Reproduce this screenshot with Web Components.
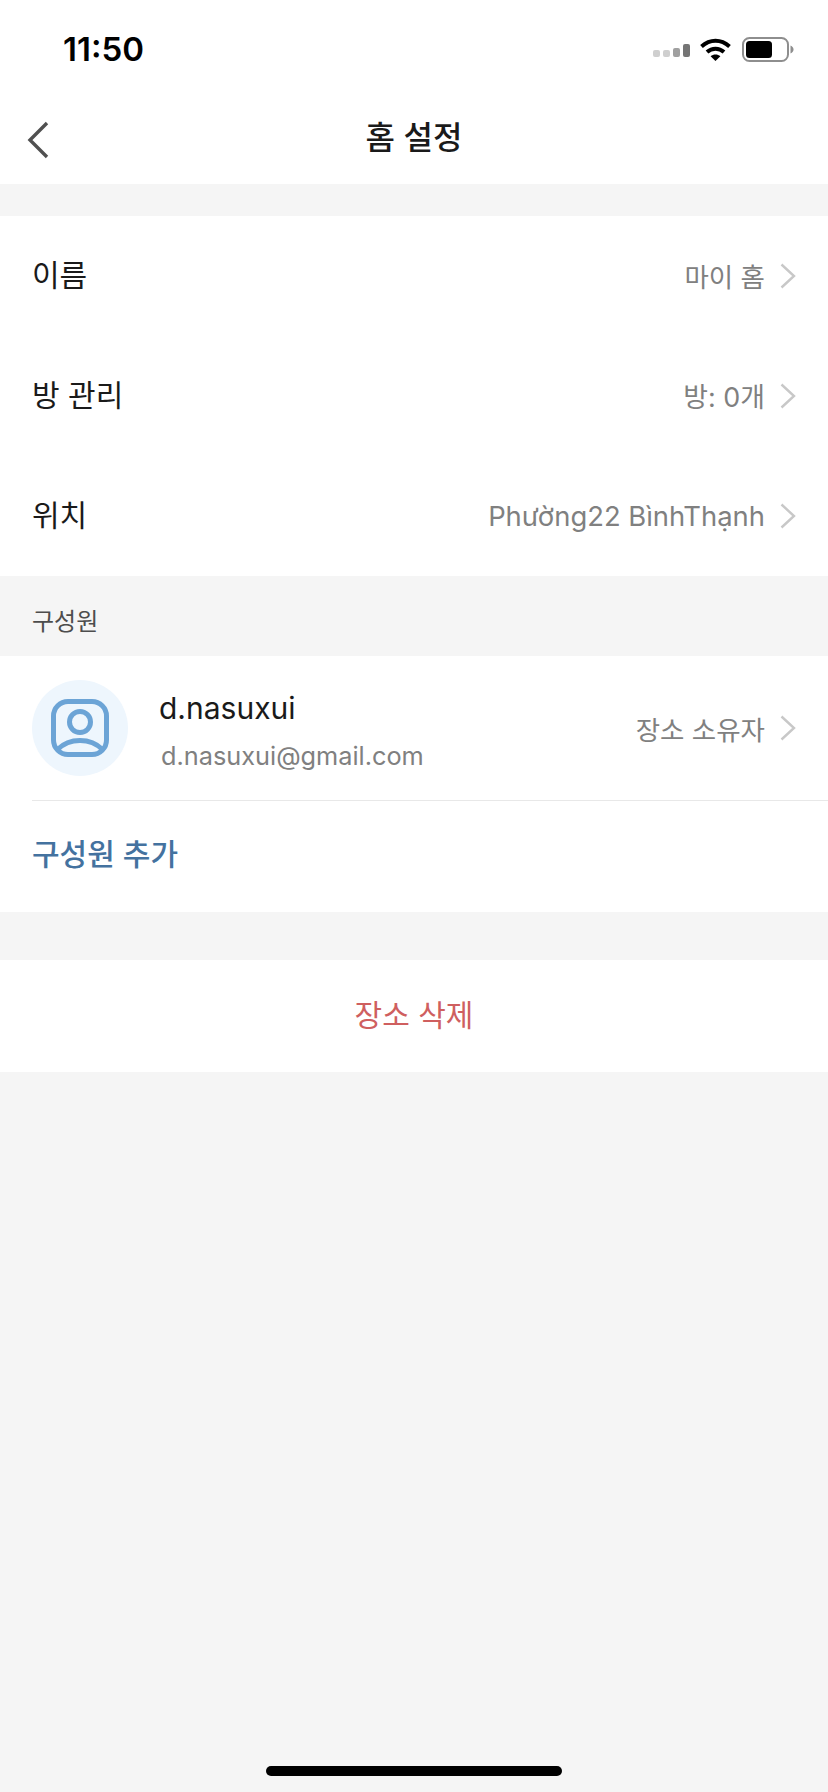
<!DOCTYPE html>
<html lang="ko">
<head>
<meta charset="utf-8">
<title>홈 설정</title>
<style>
html, body { margin: 0; height: 100%; }
body {
    background: #f5f5f5;
    font-family: Inter, "Noto Sans CJK KR", sans-serif;
}
app-screen { height: 1792px; }
</style>
</head>
<body>
<app-screen>
    <status-bar time="11:50"></status-bar>
    <nav-bar heading="홈 설정"></nav-bar>
    <setting-group style="margin-top:32px">
        <setting-row label="이름" value="마이 홈" value-lift="2"></setting-row>
        <setting-row label="방 관리" value="방: 0개" value-size="26.9" value-lift="2"></setting-row>
        <setting-row label="위치" value="Phường22 BìnhThạnh" value-size="27.4"></setting-row>
    </setting-group>
    <section-title>구성원</section-title>
    <setting-group>
        <member-row name="d.nasuxui" email="d.nasuxui@gmail.com" role="장소 소유자"></member-row>
        <action-row color="#44729f" align="left" weight="500" height="111" lift="9">구성원 추가</action-row>
    </setting-group>
    <setting-group style="margin-top:48px">
        <action-row color="#cf5f5f" align="center" weight="400" height="112" lift="6">장소 삭제</action-row>
    </setting-group>
    <home-indicator></home-indicator>
</app-screen>

<script>
const CHEVRON = `<svg width="16" height="26" viewBox="0 0 16 26" fill="none"><path d="M1.5 1.5 14 13 1.5 24.5" stroke="#c8c8c8" stroke-width="2.4"/></svg>`;

class AppScreen extends HTMLElement {
    constructor() {
        super();
        this.attachShadow({ mode: 'open' });
        this.shadowRoot.innerHTML = `
<style>
:host { display: flex; flex-direction: column; position: relative; width: 828px; background: #f5f5f5; overflow: hidden; }
</style>
<slot></slot>`;
    }
}

class StatusBar extends HTMLElement {
    constructor() {
        super();
        this.attachShadow({ mode: 'open' });
    }

    connectedCallback() {
        this.shadowRoot.innerHTML = `
<style>
:host { display: flex; align-items: center; justify-content: space-between; height: 88px; padding: 11px 34px 0 63px; background: #fff; box-sizing: border-box; }
.time { font: 600 33px/1 Inter, sans-serif; color: #000; }
.icons { display: flex; align-items: center; }
</style>
<span class="time">${this.getAttribute('time')}</span>
<div class="icons">
    <svg width="37" height="16" viewBox="0 0 37 16" style="margin-right:9px;margin-top:2px">
        <rect x="0" y="7" width="7" height="7" rx="2" fill="#cfcfcf"/>
        <rect x="10" y="7" width="7" height="7" rx="2" fill="#cfcfcf"/>
        <rect x="20" y="5" width="7" height="9" rx="2" fill="#a0a0a0"/>
        <rect x="30" y="1" width="7" height="13" rx="2" fill="#757575"/>
    </svg>
    <svg width="33" height="25" viewBox="0 0 33 25" fill="none" style="margin-right:10px">
        <path d="M2.5 9.5C11 1.8 22 1.8 30.5 9.5" stroke="#000" stroke-width="4"/>
        <path d="M8 15C13 10.6 20 10.6 25 15" stroke="#000" stroke-width="4"/>
        <path d="M16.5 24 11.6 19.2C14.4 16.8 18.6 16.8 21.4 19.2Z" fill="#000"/>
    </svg>
    <svg width="52" height="25" viewBox="0 0 52 25" fill="none">
        <rect x="1" y="1" width="45" height="23" rx="6.5" stroke="#8e8e8e" stroke-width="2"/>
        <rect x="4" y="4" width="26" height="17" rx="3.5" fill="#000"/>
        <path d="M48.5 8.5C50.5 9.3 51.5 10.8 51.5 12.5S50.5 15.7 48.5 16.5Z" fill="#8e8e8e"/>
    </svg>
</div>`;
    }
}

class NavBar extends HTMLElement {
    constructor() {
        super();
        this.attachShadow({ mode: 'open' });
    }

    connectedCallback() {
        this.shadowRoot.innerHTML = `
<style>
:host { display: flex; align-items: center; justify-content: center; position: relative; height: 96px; padding-top: 4px; box-sizing: border-box; background: #fff; }
h1 { margin: 0; font: 500 32px/1 Inter, "Noto Sans CJK KR", sans-serif; color: #1a1a1a; }
svg { position: absolute; left: 27px; top: 33px; }
</style>
<svg width="22" height="38" viewBox="0 0 22 38" fill="none"><path d="M20 2 3 19 20 36" stroke="#505050" stroke-width="3.4"/></svg>
<h1>${this.getAttribute('heading')}</h1>`;
    }
}

class SettingGroup extends HTMLElement {
    constructor() {
        super();
        this.attachShadow({ mode: 'open' });
        this.shadowRoot.innerHTML = `
<style>
:host { display: block; background: #fff; }
</style>
<slot></slot>`;
    }
}

class SettingRow extends HTMLElement {
    constructor() {
        super();
        this.attachShadow({ mode: 'open' });
    }

    connectedCallback() {
        const valueSize = this.getAttribute('value-size') || 26.5;
        const valueLift = this.getAttribute('value-lift') || 0;
        this.shadowRoot.innerHTML = `
<style>
:host { display: flex; align-items: center; height: 120px; padding: 0 32px; font-family: Inter, "Noto Sans CJK KR", sans-serif; }
.label { flex: 1; font-size: 30px; color: #1a1a1a; padding-bottom: 6px; }
.value { font-size: ${valueSize}px; color: #808080; margin-right: 15px; padding-bottom: ${valueLift}px; }
</style>
<span class="label">${this.getAttribute('label')}</span>
<span class="value">${this.getAttribute('value')}</span>
${CHEVRON}`;
    }
}

class SectionTitle extends HTMLElement {
    constructor() {
        super();
        this.attachShadow({ mode: 'open' });
        this.shadowRoot.innerHTML = `
<style>
:host { display: flex; align-items: center; height: 80px; padding: 6px 32px 0; box-sizing: border-box; font: 24px Inter, "Noto Sans CJK KR", sans-serif; color: #4d4d4d; }
</style>
<slot></slot>`;
    }
}

class MemberRow extends HTMLElement {
    constructor() {
        super();
        this.attachShadow({ mode: 'open' });
    }

    connectedCallback() {
        this.shadowRoot.innerHTML = `
<style>
:host { display: block; padding-left: 32px; font-family: Inter, "Noto Sans CJK KR", sans-serif; }
.row { display: flex; align-items: center; height: 144px; padding-right: 32px; border-bottom: 1px solid #e8e8e8; }
.avatar { display: flex; align-items: center; justify-content: center; width: 96px; height: 96px; border-radius: 50%; background: #eef6fd; margin-right: 31px; }
.text { flex: 1; display: flex; flex-direction: column; gap: 11px; padding-top: 5px; }
.name { font-size: 30px; line-height: 40px; color: #1a1a1a; }
.email { font-size: 25.3px; line-height: 34px; color: #808080; padding-left: 2px; }
.role { font-size: 26.5px; color: #808080; margin-right: 15px; }
</style>
<div class="row">
    <div class="avatar">
        <svg width="58" height="58" viewBox="0 0 58 58" fill="none" stroke="#6ca4d6" stroke-width="5">
            <rect x="2.5" y="2.5" width="53" height="53" rx="14.5"/>
            <circle cx="29" cy="23" r="10.5"/>
            <path d="M6.5 50.5C12 45 20 41.5 29 41.5S46 45 51.5 50.5"/>
        </svg>
    </div>
    <div class="text">
        <span class="name">${this.getAttribute('name')}</span>
        <span class="email">${this.getAttribute('email')}</span>
    </div>
    <span class="role">${this.getAttribute('role')}</span>
    ${CHEVRON}
</div>`;
    }
}

class ActionRow extends HTMLElement {
    constructor() {
        super();
        this.attachShadow({ mode: 'open' });
    }

    connectedCallback() {
        const align = this.getAttribute('align') === 'center' ? 'center' : 'flex-start';
        this.shadowRoot.innerHTML = `
<style>
:host { display: flex; align-items: center; justify-content: ${align}; box-sizing: border-box; height: ${this.getAttribute('height')}px; padding: 0 32px ${this.getAttribute('lift')}px; font: ${this.getAttribute('weight')} 30px Inter, "Noto Sans CJK KR", sans-serif; color: ${this.getAttribute('color')}; }
</style>
<slot></slot>`;
    }
}

class HomeIndicator extends HTMLElement {
    constructor() {
        super();
        this.attachShadow({ mode: 'open' });
        this.shadowRoot.innerHTML = `
<style>
:host { position: absolute; left: 266px; top: 1766px; width: 296px; height: 10px; border-radius: 5px; background: #000; }
</style>`;
    }
}

customElements.define('app-screen', AppScreen);
customElements.define('status-bar', StatusBar);
customElements.define('nav-bar', NavBar);
customElements.define('setting-group', SettingGroup);
customElements.define('setting-row', SettingRow);
customElements.define('section-title', SectionTitle);
customElements.define('member-row', MemberRow);
customElements.define('action-row', ActionRow);
customElements.define('home-indicator', HomeIndicator);
</script>
</body>
</html>
